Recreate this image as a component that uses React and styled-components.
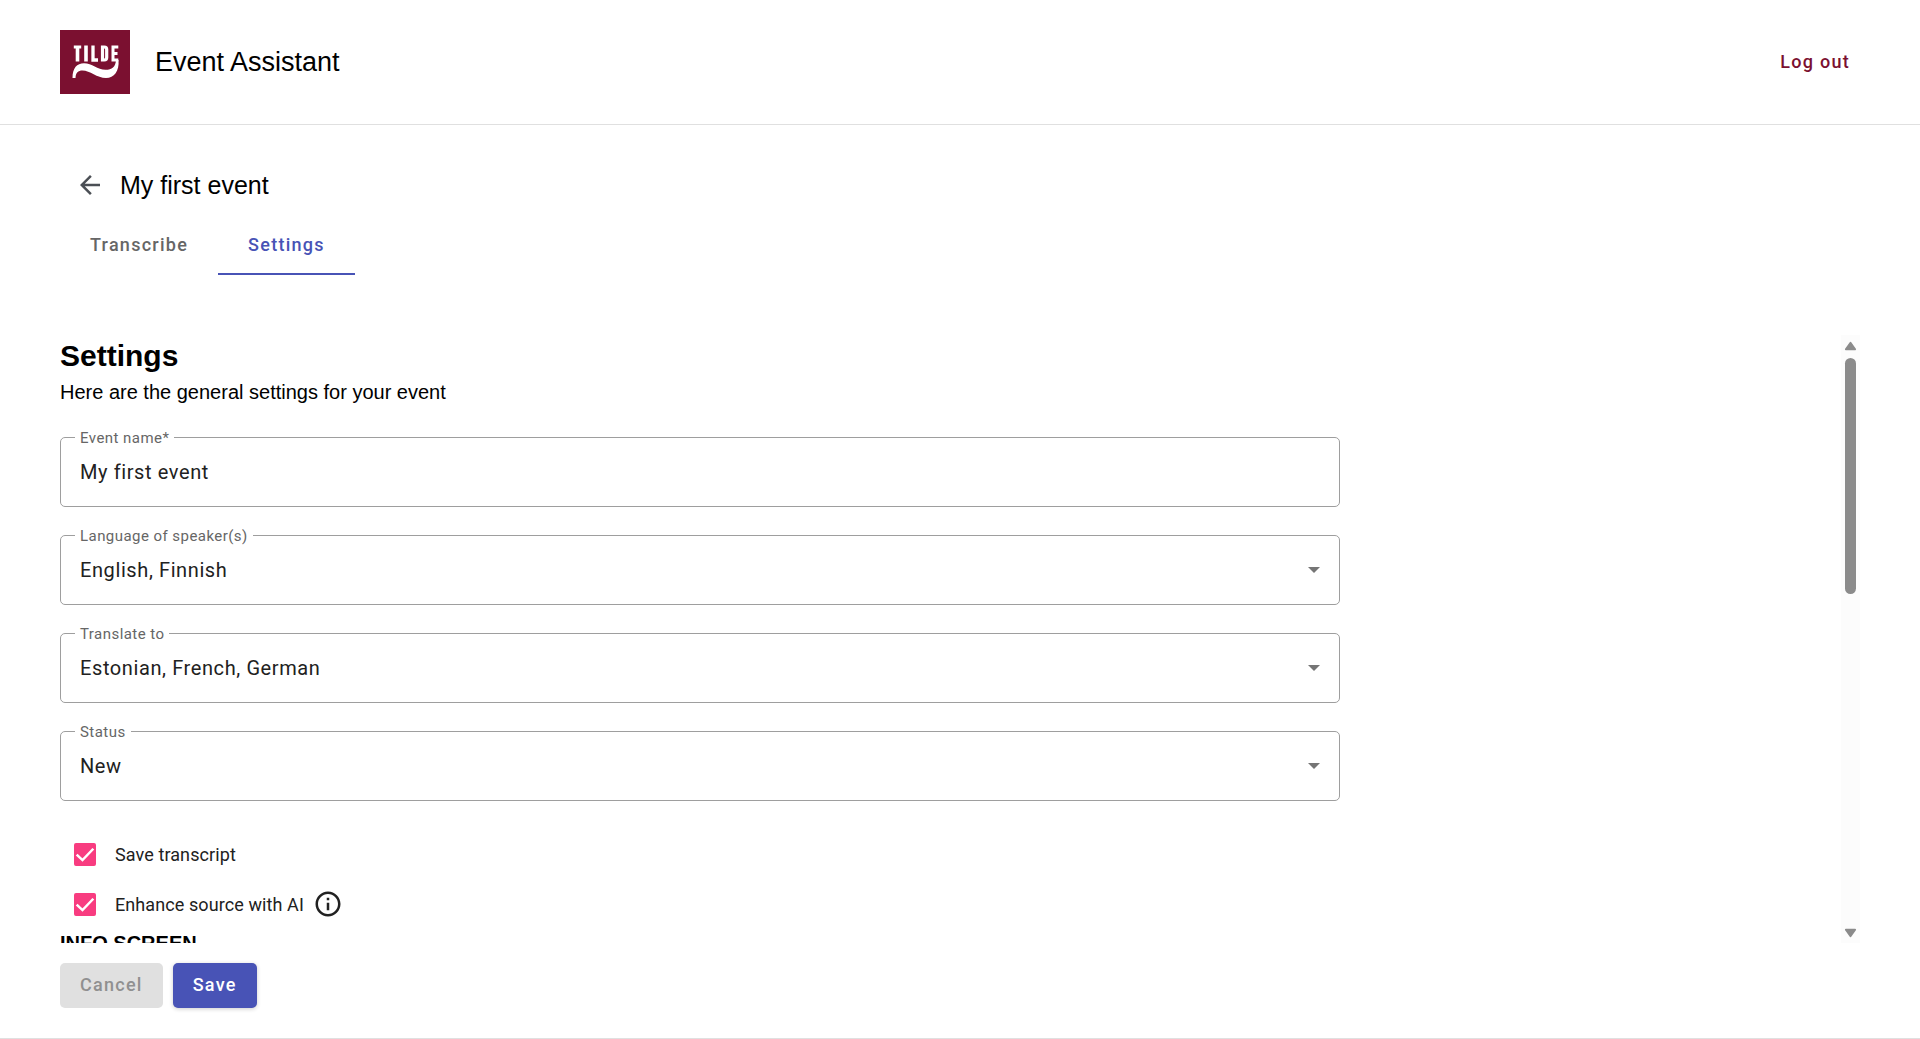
import React, { useState } from "react";
import styled, { createGlobalStyle } from "styled-components";

const GlobalStyle = createGlobalStyle`
  *, *::before, *::after { box-sizing: border-box; }
  body {
    margin: 0;
    background: #fff;
    color: #000;
    font-family: "Liberation Sans", Arial, sans-serif;
  }
`;

const roboto = `Roboto, "Noto Sans", sans-serif`;
const brand = "#7b1030";
const primary = "#4853b6";
const accent = "#f83c80";

const Page = styled.div`
  display: flex;
  flex-direction: column;
  height: 100vh;
  border-bottom: 1px solid #e0e0e0;
`;

const Header = styled.header`
  display: flex;
  align-items: center;
  gap: 25px;
  padding: 30px 60px;
  border-bottom: 1px solid #e0e0e0;
`;

const Logo = styled.svg`
  display: block;
  width: 70px;
  height: 64px;
`;

const AppName = styled.span`
  flex: 1;
  font-size: 27px;
  line-height: 32px;
`;

const Button = styled.button`
  height: 45px;
  padding: 0 20px 2px;
  border: 0;
  border-radius: 5px;
  font: 500 18px/24px ${roboto};
  letter-spacing: 0.07em;
  cursor: pointer;
`;

const LogoutButton = styled(Button)`
  padding: 0 10px;
  background: transparent;
  color: ${brand};
`;

const SaveButton = styled(Button)`
  background: ${primary};
  color: #fff;
  box-shadow: 0 1px 4px rgba(0, 0, 0, 0.2);
`;

const CancelButton = styled(Button)`
  background: #e0e0e0;
  color: #909090;
  cursor: default;
`;

const Main = styled.main`
  flex: 1;
  min-height: 0;
  display: flex;
  flex-direction: column;
  padding: 30px 60px;
`;

const TitleRow = styled.div`
  display: flex;
  align-items: center;
  height: 60px;
`;

const BackButton = styled.button`
  display: grid;
  place-items: center;
  width: 60px;
  height: 60px;
  padding: 0;
  border: 0;
  background: transparent;
  color: #4b4f55;
  cursor: pointer;
`;

const Icon = styled.svg`
  display: block;
  width: 30px;
  height: 30px;
  fill: currentColor;
`;

const EventTitle = styled.h1`
  margin: 0;
  font-size: 25px;
  font-weight: 400;
  line-height: 32px;
`;

const Tabs = styled.nav`
  display: flex;
  height: 60px;
`;

const Tab = styled.a`
  display: flex;
  align-items: center;
  padding: 2px 30px 0;
  border-bottom: 2px solid ${(p) => (p.$active ? primary : "transparent")};
  color: ${(p) => (p.$active ? primary : "#666")};
  font: 500 18px/24px ${roboto};
  letter-spacing: 0.07em;
  text-decoration: none;
`;

const ScrollArea = styled.div`
  flex: 1;
  min-height: 0;
  display: flex;
  margin-top: 60px;
`;

const Content = styled.form`
  flex: 1;
  overflow-y: auto;
  scrollbar-width: none;
`;

const Heading = styled.h2`
  margin: 0;
  font-size: 30px;
  line-height: 42px;
`;

const Intro = styled.p`
  margin: 2px 0 32px;
  font-size: 20px;
  line-height: 26px;
`;

const Fields = styled.div`
  display: grid;
  gap: 28px;
  max-width: 1280px;
`;

const FieldBox = styled.div`
  position: relative;
  height: 70px;
  border: 1px solid #9e9e9e;
  border-radius: 5px;
`;

const FieldLabel = styled.label`
  position: absolute;
  top: -10px;
  left: 14px;
  padding: 0 5px;
  background: #fff;
  color: #666;
  font: 400 15px/20px ${roboto};
  letter-spacing: 0.03em;
`;

const controlStyle = `
  display: block;
  width: 100%;
  height: 100%;
  padding: 0 19px;
  border: 0;
  border-radius: 5px;
  background: transparent;
  color: #212121;
  font: 400 20px/30px ${roboto};
  letter-spacing: 0.03em;
  appearance: none;
`;

const TextInput = styled.input`
  ${controlStyle}
`;

const Select = styled.select`
  ${controlStyle}
`;

const Caret = styled.span`
  position: absolute;
  top: 50%;
  right: 19px;
  margin-top: -3px;
  border: 6px solid transparent;
  border-top-color: #757575;
  border-bottom-width: 0;
  pointer-events: none;
`;

const Options = styled.div`
  padding-top: 28px;
`;

const OptionRow = styled.div`
  display: flex;
  align-items: center;
  height: 50px;
  padding-left: 14px;
`;

const CheckMark = styled.span`
  position: relative;
  display: grid;
  place-items: center;
  width: 22px;
  height: 23px;
`;

const Checkbox = styled.input`
  position: absolute;
  inset: 0;
  width: 100%;
  height: 100%;
  margin: 0;
  border: 2px solid #757575;
  border-radius: 2px;
  appearance: none;

  &:checked {
    border-color: ${accent};
    background: ${accent};
  }
`;

const Tick = styled.svg`
  position: relative;
  width: 20px;
  height: 20px;
  fill: none;
  stroke: #fff;
  stroke-width: 3;
  pointer-events: none;
`;

const OptionLabel = styled.label`
  padding: 2px 0 0 19px;
  color: #212121;
  font: 400 18px/24px ${roboto};
  letter-spacing: 0.005em;
`;

const InfoButton = styled.button`
  display: block;
  margin-left: 9px;
  padding: 0;
  border: 0;
  background: transparent;
  color: #212121;
`;

const SectionTitle = styled.h3`
  margin: 0;
  font-size: 20px;
  line-height: 28px;
`;

const Scrollbar = styled.div`
  display: flex;
  flex-direction: column;
  align-items: center;
  width: 19px;
  padding: 6px 0 5px;
  background: #fcfcfc;
`;

const Arrow = styled.svg`
  width: 13px;
  height: 10px;
  fill: #8b8b8b;
  stroke: #8b8b8b;
  stroke-width: 2;
  stroke-linejoin: round;
`;

const Track = styled.div`
  flex: 1;
  width: 11px;
  margin: 7px 0;
`;

const Thumb = styled.div`
  height: 42%;
  border-radius: 6px;
  background: #8b8b8b;
`;

const Actions = styled.div`
  display: flex;
  gap: 10px;
  padding-top: 20px;
`;

function TildeLogo() {
  return (
    <Logo viewBox="0 0 70 64" role="img" aria-label="Tilde">
      <rect width="70" height="64" fill={brand} />
      <g fill="none" stroke="#fff" strokeWidth="3.6">
        <path d="M13.8 17H21.2" strokeWidth="3" />
        <path d="M17.5 16V31.500M26 15.500V31.500" />
        <path d="M33 15.500V30H38" strokeWidth="3.3" />
        <path d="M42.500 17H44.300Q46.700 17 46.700 19.500V27.500Q46.700 30 44.300 30H42.500Z" strokeWidth="3.2" />
        <path d="M58.300 17H53V31.500M53 23.500H57.500M52 30H58.300" strokeWidth="3" />
      </g>
      <path
        fill="#fff"
        d="M12.500 48C12.500 38 17 33.300 24 33.300C32 33.300 37.500 39.800 45.500 39.800C52 39.800 55.500 37 56 30H58.500C59.500 41 54 48 46 48C37 48 30 40.500 22.500 40.500C18 40.500 15.800 42.500 15.500 48Z"
      />
    </Logo>
  );
}

function SelectField({ id, label, value }) {
  return (
    <FieldBox>
      <Select id={id} defaultValue={value}>
        <option>{value}</option>
      </Select>
      <FieldLabel htmlFor={id}>{label}</FieldLabel>
      <Caret />
    </FieldBox>
  );
}

function CheckOption({ id, label, children }) {
  const [checked, setChecked] = useState(true);
  return (
    <OptionRow>
      <CheckMark>
        <Checkbox
          type="checkbox"
          id={id}
          checked={checked}
          onChange={(e) => setChecked(e.target.checked)}
        />
        <Tick viewBox="0 0 24 24">
          <path d="M2 12.7 9 19.3 22 5.7" />
        </Tick>
      </CheckMark>
      <OptionLabel htmlFor={id}>{label}</OptionLabel>
      {children}
    </OptionRow>
  );
}

export default function App() {
  return (
    <>
      <GlobalStyle />
      <Page>
        <Header>
          <TildeLogo />
          <AppName>Event Assistant</AppName>
          <LogoutButton type="button">Log out</LogoutButton>
        </Header>
        <Main>
          <TitleRow>
            <BackButton type="button" aria-label="Back">
              <Icon viewBox="0 0 24 24">
                <path d="M20 11H7.830l5.590-5.590L12 4l-8 8 8 8 1.410-1.410L7.830 13H20v-2z" />
              </Icon>
            </BackButton>
            <EventTitle>My first event</EventTitle>
          </TitleRow>
          <Tabs>
            <Tab href="#transcribe">Transcribe</Tab>
            <Tab href="#settings" $active aria-current="page">
              Settings
            </Tab>
          </Tabs>
          <ScrollArea>
            <Content id="settings-form">
              <Heading>Settings</Heading>
              <Intro>Here are the general settings for your event</Intro>
              <Fields>
                <FieldBox>
                  <TextInput id="name" defaultValue="My first event" />
                  <FieldLabel htmlFor="name">Event name*</FieldLabel>
                </FieldBox>
                <SelectField id="speakers" label="Language of speaker(s)" value="English, Finnish" />
                <SelectField id="targets" label="Translate to" value="Estonian, French, German" />
                <SelectField id="status" label="Status" value="New" />
              </Fields>
              <Options>
                <CheckOption id="save-transcript" label="Save transcript" />
                <CheckOption id="enhance" label="Enhance source with AI">
                  <InfoButton type="button" aria-label="Info">
                    <Icon viewBox="0 0 24 24">
                      <path d="M11 7h2v2h-2zm0 4h2v6h-2zm1-9C6.480 2 2 6.480 2 12s4.480 10 10 10 10-4.480 10-10S17.520 2 12 2zm0 18c-4.410 0-8-3.590-8-8s3.590-8 8-8 8 3.590 8 8-3.590 8-8 8z" />
                    </Icon>
                  </InfoButton>
                </CheckOption>
              </Options>
              <SectionTitle>INFO SCREEN</SectionTitle>
            </Content>
            <Scrollbar aria-hidden="true">
              <Arrow viewBox="0 0 14 10">
                <path d="M7 1.500 12 8.500H2Z" />
              </Arrow>
              <Track>
                <Thumb />
              </Track>
              <Arrow viewBox="0 0 14 10">
                <path d="M7 8.500 12 1.500H2Z" />
              </Arrow>
            </Scrollbar>
          </ScrollArea>
          <Actions>
            <CancelButton type="button">Cancel</CancelButton>
            <SaveButton type="submit" form="settings-form">
              Save
            </SaveButton>
          </Actions>
        </Main>
      </Page>
    </>
  );
}
